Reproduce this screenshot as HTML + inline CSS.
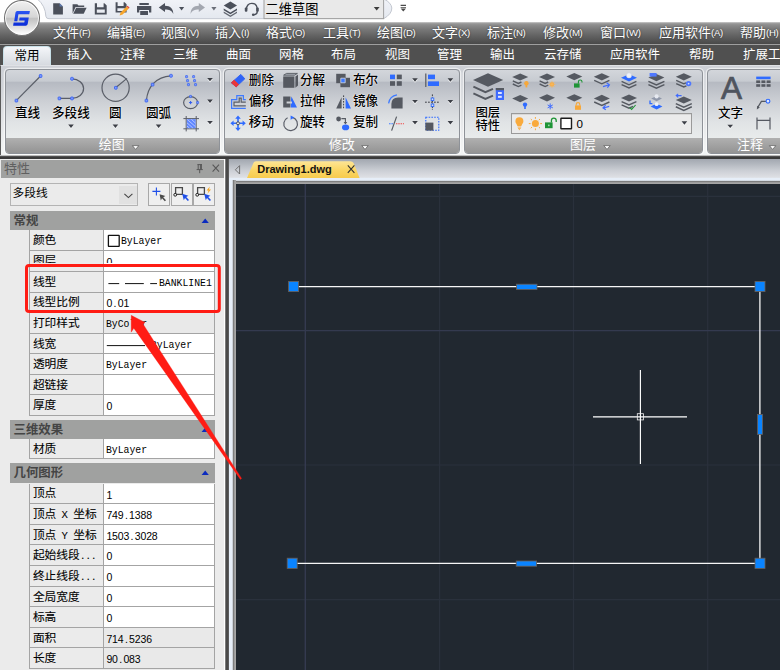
<!DOCTYPE html>
<html lang="zh-CN">
<head>
<meta charset="utf-8">
<title>Drawing1.dwg</title>
<style>
*{box-sizing:border-box;margin:0;padding:0}
html,body{width:780px;height:670px;overflow:hidden;background:#fff}
body{position:relative;font-family:"Liberation Sans","Noto Sans CJK SC",sans-serif;font-size:13px;color:#000}
.abs,.abs *{position:absolute}
#app{position:absolute;left:0;top:0;width:780px;height:670px;overflow:hidden;background:#f0f0f0}
#app div,#app span,#app svg{position:absolute}
.t{white-space:nowrap;line-height:1}

/* title / quick access */
#title{left:0;top:0;width:780px;height:22px;background:#fff;z-index:5}

/* menu bar */
#menu{left:0;top:22px;width:780px;height:23px;background:linear-gradient(#dcdcdc 0,#a2a2a2 4%,#8e8e8e 12%,#787878 32%,#626262 60%,#4e4e4e 88%,#4a4a4a 94%,#8c8c8c 96%,#b4b4b4 100%)}
#menu .t{top:4px;font-size:13px;color:#fff;text-shadow:0 0 2px rgba(0,0,0,.6)}
#menu .t i{font-style:normal;font-size:9.6px;letter-spacing:-.3px;position:relative;top:-1px}

/* tabs */
#tabs{left:0;top:45px;width:780px;height:20px;background:#505050}
#tabs .t{top:4px;font-size:12.5px;color:#fff}
#tabon{left:2.5px;top:0.6px;width:48px;height:21px;background:linear-gradient(#f4f6f9,#d3d7dd);border:1px solid #c8e0e8;border-bottom:none;border-radius:4px 4px 0 0}
#tabon .t{left:11px;top:3px;color:#000}

/* ribbon */
#ribbon{left:0;top:65px;width:780px;height:91px;background:linear-gradient(#cdd0d6 0,#d0d3d8 20px,#e4e6e8 60px,#f2f4f4 85px);border-top:1px solid #dfe1e5;border-left:1.5px solid #5a5a5a}
.grp{top:2.6px;height:85px;border:1px solid #8e9298;border-radius:4px;background:linear-gradient(#d3d6db 0,#c7cbd1 11px,#b6bac2 12.5px,#cdd0d5 32px,#e0e3e5 52px,#e9ecec 69px);overflow:hidden;box-shadow:0 0 0 1.3px rgba(255,255,255,.62)}
.grp .ttl{left:0;bottom:0;width:100%;height:15px;background:linear-gradient(#b0b0b0,#939393)}
.grp .ttl .t{top:0.5px;font-size:13px;color:#fff}
.lbl{font-size:12.6px;font-weight:500;color:#000;white-space:nowrap;line-height:12px;text-shadow:0 0 2px #fff,0 0 1px #fff}
#ricons{left:0;top:0;width:780px;height:160px;pointer-events:none}
#rsep{left:0;top:154.6px;width:780px;height:4.4px;background:linear-gradient(#efefef 0,#8a8a8a 1px,#3a3a3a 1.7px,#3a3a3a 3.6px,#777 4.4px)}

/* properties */
#prop{left:0;top:159px;width:226px;height:511px;background:linear-gradient(90deg,#ebebeb 0,#ebebeb 223.6px,#fff 224px,#fff 225.2px,#999 225.6px)}
#ptitle{left:1px;top:1.2px;width:223px;height:17.6px;background:#a0a1a0}
#ptitle .t{left:3px;top:1.5px;font-size:13px;color:#606060}
#pcombo{left:10px;top:24px;width:128px;height:23px;background:#ebebeb;border:1px solid #b4b4b4}
#pcombo .t{left:1.6px;top:4.4px;font-size:11.7px}
#pcombo .dd{left:108px;top:2px;width:18px;height:18px;background:#e1e1e1}
.pbtn{top:24px;width:22.4px;height:23px;background:#efefef;border:1px solid #a8a8a8}
.sec{left:10px;width:205px;height:19.4px;background:#a0a1a0}
.sec .t{left:3.6px;top:4px;font-size:12.4px;font-weight:bold;color:#454545}
.sec svg{left:191.4px;top:7px}
.row{left:29.4px;width:185.6px;height:21px;border:1px solid #a4a4a4;border-top:none;background:#fff}
.row .n{left:0;top:0;width:73.6px;height:19px;background:#ebebeb;border-right:1px solid #a4a4a4}
.row .n .t{left:2.5px;top:4.6px;font-size:11.7px;-webkit-text-stroke:.08px #000;font-family:"Liberation Serif","Noto Sans CJK SC",sans-serif}
.row .v{left:76px;top:5px;font-family:"Liberation Mono",monospace;font-size:10.8px;white-space:nowrap;line-height:13px;transform:scaleX(.905);transform-origin:0 0}
.row .v.d{font-family:"Liberation Sans",sans-serif;font-size:10.5px;transform:none;top:5px;left:76px;letter-spacing:-.15px}
.row .v.d i{font-style:normal;position:static;display:inline-block;width:5.6px;text-align:center}
.row .w{left:75.6px;top:5px;width:108px;height:14px}
.row .w .v{left:0;top:0}
.row .n i{font-style:normal;position:static;display:inline-block;width:17px;text-align:center;font-family:"Liberation Mono",monospace;font-size:10.6px}
.row .n b{font-weight:normal;position:static;letter-spacing:2.6px;padding-left:1.5px}
.row.a .n .t{top:4.8px}
.row.g{background:#e9e9e9}

/* drawing */
#split{left:225.2px;top:159px;width:3.8px;height:511px;background:linear-gradient(90deg,#9a9a9a 0,#6a6a6a .8px,#4a4a4a 1.4px,#4a4a4a 3.3px,#777 3.8px)}
#dtab{left:229px;top:159px;width:551px;height:25px;background:linear-gradient(#a2a7b0 0,#b3b8bf 5px,#cdd0d6 12px,#dee0e4 18.4px,#e6eef8 19px,#e6eef8 21.4px,#7e7e7e 22px,#7e7e7e 23.2px,#a6a6a6 23.6px,#a6a6a6 25px)}
#dframe{left:229px;top:180.4px;width:7px;height:490px;background:linear-gradient(90deg,#e6eef8 0,#e6eef8 3.4px,#7e7e7e 3.8px,#7e7e7e 5.2px,#a6a6a6 5.6px,#a6a6a6 7px)}
#canvas{left:236px;top:184px;width:544px;height:486px;background:#212830}
#cv{left:0;top:0;width:780px;height:670px}
#anno{left:0;top:0;width:780px;height:670px;z-index:9}
</style>
</head>
<body>
<div id="app">

<div id="title">
  <svg id="qatsvg" width="420" height="23" viewBox="0 0 420 23" style="left:0;top:0">
    <defs>
      <linearGradient id="qg" x1="0" y1="0" x2="0" y2="1"><stop offset="0" stop-color="#f1f3f8"/><stop offset="1" stop-color="#e4e8ef"/></linearGradient>
    </defs>
    <path d="M37.4,-1 A24,24 0 0 1 45.9,16.4 Q46.2,18.7 49,18.7 L383.6,18.7 Q392,14 391.8,8 Q391.5,3 384,-1 Z" fill="url(#qg)" stroke="#c3c7d0" stroke-width="1"/>
    <!-- new -->
    <path d="M53.2,3.2 H59.6 L62.9,6.6 V14.4 H53.2 Z" fill="#4b505b"/>
    <path d="M59.6,3.2 L62.9,6.6 H59.6 Z" fill="#5d79b0"/>
    <!-- open -->
    <path d="M72.6,13.6 V4.2 H77.3 L78.5,5.4 H84.2 V7 H75.6 L72.6,13.6 Z" fill="#4b505b"/>
    <path d="M76.2,7.8 H86.6 L83.7,13.8 H73.2 Z" fill="#4b505b"/>
    <!-- save -->
    <path d="M94.8,3.2 H104.4 L106.7,5.4 V14.4 H94.8 Z M97,3.2 V7.2 H103.6 V3.2 Z M96.8,9.6 V12.8 H104.8 V9.6 Z" fill="#4b505b" fill-rule="evenodd"/>
    <!-- save as -->
    <path d="M115.6,2.2 H124.6 L126.6,4.2 V12.4 H115.6 Z M117.6,2.2 V6 H123.6 V2.2 Z M117.4,8.2 V11 H124.8 V8.2 Z" fill="#4b505b" fill-rule="evenodd"/>
    <path d="M119.6,15.4 L120.6,12.4 L126.6,6.6 L128.8,8.6 L122.6,14.6 Z" fill="#f6a52c"/>
    <path d="M126.6,6.6 L127.6,5.8 L129.6,7.8 L128.8,8.6 Z" fill="#e8433a"/>
    <!-- print -->
    <path d="M139.4,3 H148.8 V5 H139.4 Z" fill="#4b505b"/>
    <path d="M137,6 H151.3 V12.4 H149 V10 H139.3 V12.4 H137 Z" fill="#4b505b"/>
    <path d="M140.2,11 H148 V15 H140.2 Z" fill="#4b505b"/>
    <!-- undo -->
    <path d="M158.8,7.4 L165,3 V5.8 C170.6,5.8 173.3,9 173.3,14 C171.6,10.8 169.4,9.6 165,9.6 V12 Z" fill="#4b505b"/>
    <path d="M179,7 H184.2 L181.6,10.4 Z" fill="#4b505b"/>
    <!-- redo -->
    <path d="M205,7.4 L198.8,3 V5.8 C193.2,5.8 190.6,9 190.6,14 C192.2,10.8 194.4,9.6 198.8,9.6 V12 Z" fill="#a3a7b0"/>
    <path d="M211.3,7 H216.5 L213.9,10.4 Z" fill="#6a6e78"/>
    <!-- layers -->
    <path d="M223.7,5.4 L230.4,1.4 L237,5.4 L230.4,9.4 Z" fill="#4b505b"/>
    <path d="M223.7,8.6 L230.4,12.6 L237,8.6 V10.2 L230.4,14.2 L223.7,10.2 Z" fill="#4b505b"/>
    <path d="M223.7,11.4 L230.4,15.4 L237,11.4 V13 L230.4,17 L223.7,13 Z" fill="#4b505b" opacity=".85"/>
    <!-- headset -->
    <path d="M246.4,9.6 C246.4,5.6 248.6,3.4 251.8,3.4 C255,3.4 257.2,5.6 257.2,9.6 V12 C257.2,13.6 256,14.6 253.6,14.8" fill="none" stroke="#4b505b" stroke-width="1.4"/>
    <rect x="244.8" y="7.6" width="2.6" height="4.2" rx="1" fill="#4b505b"/>
    <rect x="256.2" y="7.6" width="2.6" height="4.2" rx="1" fill="#4b505b"/>
    <circle cx="253.2" cy="14.8" r="1.3" fill="#4b505b"/>
    <!-- combo -->
    <rect x="264" y="-1" width="119.6" height="19.6" fill="#e9e9e9" stroke="#a0a0a0"/>
    <text x="265.6" y="14" font-size="13.2" fill="#000" font-family="'Liberation Sans','Noto Sans CJK SC',sans-serif">二维草图</text>
    <path d="M373.8,7 H379.6 L376.7,10.4 Z" fill="#3c3c3c"/>
    <!-- customize -->
    <path d="M400.6,4.8 H406 V6 H400.6 Z M400.6,7 H406 V7.8 H400.6 Z M400.6,8.4 H406 L403.3,11.6 Z" fill="#4a4a4a"/>
  </svg>
  <svg id="appbtn" width="46" height="40" viewBox="0 0 46 40" style="left:0;top:0">
    <defs>
      <linearGradient id="ab" x1="0" y1="0" x2="0" y2="1">
        <stop offset="0" stop-color="#efefef"/><stop offset=".47" stop-color="#d6d6d6"/><stop offset=".52" stop-color="#c2c2c2"/><stop offset=".8" stop-color="#e2e2e2"/><stop offset="1" stop-color="#fcfcfc"/>
      </linearGradient>
      <linearGradient id="gb" x1="0" y1="0" x2="0" y2="1"><stop offset="0" stop-color="#2c55f2"/><stop offset="1" stop-color="#0a2cd8"/></linearGradient>
    </defs>
    <circle cx="22" cy="18" r="17.5" fill="#fdfdfd" stroke="#727272" stroke-width="1.1"/>
    <circle cx="22" cy="18" r="16" fill="url(#ab)"/>
    <path d="M17.2,11.1 H29.9 L29.3,14.2 H18.4 L17.3,21.3 H14.2 L15.5,12.6 Q15.8,11.1 17.2,11.1 Z M19.6,17.6 H28.8 L27.7,24 Q27.3,25.7 25.7,25.7 H13.1 L13.6,22.6 H24.3 L24.7,20.4 H19.1 Z" fill="url(#gb)"/>
  </svg>
</div>

<div id="menu">
  <span class="t" style="left:53px">文件<i>(F)</i></span>
  <span class="t" style="left:107px">编辑<i>(E)</i></span>
  <span class="t" style="left:161px">视图<i>(V)</i></span>
  <span class="t" style="left:215px">插入<i>(I)</i></span>
  <span class="t" style="left:266px">格式<i>(O)</i></span>
  <span class="t" style="left:323px">工具<i>(T)</i></span>
  <span class="t" style="left:377px">绘图<i>(D)</i></span>
  <span class="t" style="left:432px">文字<i>(X)</i></span>
  <span class="t" style="left:487px">标注<i>(N)</i></span>
  <span class="t" style="left:543px">修改<i>(M)</i></span>
  <span class="t" style="left:600px">窗口<i>(W)</i></span>
  <span class="t" style="left:659px">应用软件<i>(A)</i></span>
  <span class="t" style="left:740px">帮助<i>(H)</i></span>
</div>

<div id="tabs">
  <div id="tabon"><span class="t">常用</span></div>
  <span class="t" style="left:67px">插入</span>
  <span class="t" style="left:120px">注释</span>
  <span class="t" style="left:173px">三维</span>
  <span class="t" style="left:226px">曲面</span>
  <span class="t" style="left:279px">网格</span>
  <span class="t" style="left:331px">布局</span>
  <span class="t" style="left:385px">视图</span>
  <span class="t" style="left:437px">管理</span>
  <span class="t" style="left:490px">输出</span>
  <span class="t" style="left:544px">云存储</span>
  <span class="t" style="left:610px">应用软件</span>
  <span class="t" style="left:689px">帮助</span>
  <span class="t" style="left:743px">扩展工具</span>
</div>

<div id="ribbon">
  <div class="grp" id="g1" style="left:3.5px;width:215px">
    <div class="ttl"><span class="t" style="left:93.2px">绘图</span></div>
  </div>
  <div class="grp" id="g2" style="left:222.5px;width:236px">
    <div class="ttl"><span class="t" style="left:104.2px">修改</span></div>
  </div>
  <div class="grp" id="g3" style="left:462.5px;width:239px">
    <div class="ttl"><span class="t" style="left:105.6px">图层</span></div>
  </div>
  <div class="grp" id="g4" style="left:705.5px;width:100px">
    <div class="ttl"><span class="t" style="left:29.4px">注释</span></div>
  </div>
</div>
<div id="lcombo" style="left:511px;top:113px;width:181px;height:21px;background:#ebebeb;border:1px solid #9a9a9a;box-shadow:inset 0 1px 0 #d8d8d8"></div>
<span class="t" id="bigA" style="left:721px;top:73.4px;font-size:31.5px;color:#4f545e;-webkit-text-stroke:.7px #4f545e;font-family:'Liberation Sans',sans-serif">A</span>
<span class="lbl" style="left:15px;top:107px">直线</span>
<span class="lbl" style="left:52px;top:107px">多段线</span>
<span class="lbl" style="left:109px;top:107px">圆</span>
<span class="lbl" style="left:146px;top:107px">圆弧</span>
<span class="lbl" style="left:248.8px;top:74px">删除</span>
<span class="lbl" style="left:248.8px;top:95px">偏移</span>
<span class="lbl" style="left:248.8px;top:116px">移动</span>
<span class="lbl" style="left:300px;top:74px">分解</span>
<span class="lbl" style="left:300px;top:95px">拉伸</span>
<span class="lbl" style="left:300px;top:116px">旋转</span>
<span class="lbl" style="left:353px;top:74px">布尔</span>
<span class="lbl" style="left:353px;top:95px">镜像</span>
<span class="lbl" style="left:353px;top:116px">复制</span>
<span class="lbl" style="left:475.4px;top:107.4px;font-size:12.4px;line-height:12.2px">图层<br>特性</span>
<span class="lbl" style="left:718px;top:107px">文字</span>
<span class="lbl" style="left:576.4px;top:118.4px;text-shadow:none;font-size:11.6px;font-weight:400">0</span>
<svg id="ricons" width="780" height="160" viewBox="0 0 780 160">
  <defs>
    <g id="dia"><path d="M-8,0 L0,-3.6 L8,0 L0,3.6 Z"/></g>
    <g id="chv"><path d="M-8,0 L0,3.6 L8,0" fill="none" stroke-width="1.5"/></g>
    <path id="dd" d="M-2.8,-1.7 H2.8 L0,1.7 Z"/>
    <rect id="bs" x="-1.3" y="-1.4" width="2.6" height="2.8" rx=".6" fill="#7f9bff" stroke="#2f5bf0" stroke-width=".8"/>
  </defs>
  <g fill="#f4f5f6" transform="translate(0,1.1)">
    <use href="#dd" x="71" y="126.2"/><use href="#dd" x="115.4" y="126.2"/><use href="#dd" x="158.6" y="126.2"/>
    <use href="#dd" x="210" y="79.6"/><use href="#dd" x="210" y="101.2"/><use href="#dd" x="210" y="122.6"/>
    <use href="#dd" x="415" y="80"/><use href="#dd" x="415" y="101.6"/><use href="#dd" x="415" y="122.8"/>
    <use href="#dd" x="450.4" y="80"/><use href="#dd" x="450.4" y="101.6"/><use href="#dd" x="450.4" y="122.8"/>
    <use href="#dd" x="684.4" y="123"/>
    <use href="#dd" x="730.2" y="126.4"/>
  </g>
  <g fill="#3c3f46">
    <use href="#dd" x="71" y="126.2"/><use href="#dd" x="115.4" y="126.2"/><use href="#dd" x="158.6" y="126.2"/>
    <use href="#dd" x="210" y="79.6"/><use href="#dd" x="210" y="101.2"/><use href="#dd" x="210" y="122.6"/>
    <use href="#dd" x="415" y="80"/><use href="#dd" x="415" y="101.6"/><use href="#dd" x="415" y="122.8"/>
    <use href="#dd" x="450.4" y="80"/><use href="#dd" x="450.4" y="101.6"/><use href="#dd" x="450.4" y="122.8"/>
    <use href="#dd" x="684.4" y="123"/>
    <use href="#dd" x="730.2" y="126.4"/>
  </g>
  <g fill="#fff" stroke="#555" stroke-width=".7" transform="translate(0,147)">
    <path id="dw" d="M132.4,-1.4 H138.8 L135.6,2.4 Z"/><path d="M361.8,-1.4 H368.2 L365,2.4 Z"/><path d="M603.8,-1.4 H610.2 L607,2.4 Z"/><path d="M769.4,-1.4 H775.8 L772.6,2.4 Z"/>
  </g>

  <!-- group 1 : draw -->
  <g fill="none" stroke="#5a5e68" stroke-width="1.2">
    <path d="M16.2,100.6 L40.6,76"/>
    <path d="M59.4,98.4 H72 A11.6,9.8 0 0 0 72,78.8"/>
    <circle cx="115.6" cy="87.8" r="13.6"/>
    <path d="M115.6,87.8 L127,78.4"/>
    <path d="M146.4,100.6 C147.5,87 156,76.6 171,75.8"/>
    <ellipse cx="190.6" cy="102.6" rx="7" ry="6"/>
    <path d="M183.4,118.6 H199 M183.4,128.8 H199 M186.2,116 V131.4 M196.2,116 V131.4" stroke-width="1"/>
  </g>
  <use href="#bs" x="16.4" y="100.6"/><use href="#bs" x="40.6" y="76"/>
  <use href="#bs" x="59.4" y="98.4"/><use href="#bs" x="72" y="98.4"/><use href="#bs" x="72" y="78.8"/>
  <use href="#bs" x="115.8" y="87.8"/>
  <use href="#bs" x="146.4" y="100.6"/><use href="#bs" x="152.6" y="84.6"/><use href="#bs" x="171" y="75.8"/>
  <g transform="scale(.8)" >
    <use href="#bs" x="233.2" y="95.8"/><use href="#bs" x="242" y="95.8"/>
    <use href="#bs" x="234.4" y="100.8"/><use href="#bs" x="243.2" y="100.8"/>
    <use href="#bs" x="235.6" y="105.8"/><use href="#bs" x="244.4" y="105.8"/>
    <use href="#bs" x="238.2" y="120.6"/><use href="#bs" x="247" y="128.2"/>
  </g>
  <path d="M189,102.6 H192.2 M190.6,101 V104.2" stroke="#2f5bf0" stroke-width="1" fill="none"/>
  <rect x="186.8" y="119.2" width="8.8" height="9" fill="#5f86ff"/>
  <path d="M195.4,123 L191.4,119.4 M195.4,126.6 L187.4,119.6 M192.8,128 L187,122.8 M189.4,128 L187,126" stroke="#c9d6ff" stroke-width=".8" fill="none"/>

  <!-- group 2 : modify -->
  <!-- erase -->
  <path d="M231.4,82.8 L240.8,74.4 L244.8,78.8 L236.2,86.8 Z" fill="#2f63f6" stroke="#2f63f6" stroke-width="1" stroke-linejoin="round"/>
  <path d="M231.4,82.8 L234.2,80.2 L238.6,84.6 L236.2,86.8 Z" fill="#e8373a" stroke="#e8373a" stroke-width="1" stroke-linejoin="round"/>
  <!-- offset -->
  <path d="M245.8,108.4 H231.6 V99.6 H236.8 V95.6 H243.4 V99.6 H245.8" fill="none" stroke="#3f7bff" stroke-width="1.2"/>
  <path d="M245.8,105.8 H234 V102.2 H239.2 V98.2 H241.2 V102.2 H245.8" fill="none" stroke="#5a5e68" stroke-width="1.2"/>
  <!-- move -->
  <g fill="#2f6bff">
    <path d="M238,115.6 L240.8,118.8 H238.8 V122 H237.2 V118.8 H235.2 Z"/>
    <path d="M238,131 L240.8,127.8 H238.8 V124.6 H237.2 V127.8 H235.2 Z"/>
    <path d="M230.4,123.3 L233.6,120.5 V122.5 H236.8 V124.1 H233.6 V126.1 Z"/>
    <path d="M245.8,123.3 L242.6,120.5 V122.5 H239.4 V124.1 H242.6 V126.1 Z"/>
  </g>
  <circle cx="238" cy="123.3" r="1.5" fill="#e8eaee" stroke="#4a4e58" stroke-width="1"/>
  <!-- explode (cube) -->
  <path d="M283.2,76.4 H294.4 V87.8 H283.2 Z" fill="#555961"/>
  <path d="M283.6,75.2 L286.6,73.4 H297.4 L294.6,75.2 Z" fill="#aeb2ba" stroke="#555961" stroke-width=".9"/>
  <path d="M295.4,76.4 L298,74.4 V85.4 L295.4,87.8 Z" fill="#555961"/>
  <!-- stretch -->
  <path d="M283.2,96.6 H290.4 V101.6 H286.6 V103.6 H290.4 V107.6 H283.2 Z" fill="#555961"/>
  <path d="M291.4,96.6 L297,107.6 H290.8 V103.6 H292 V101.6 H290.8 Z" fill="#2f6bff"/>
  <!-- rotate -->
  <path d="M292.6,117.4 A6.8,6.8 0 1 1 287.6,117.8" fill="none" stroke="#5a5e68" stroke-width="1.2"/>
  <path d="M290.6,115.4 L294.4,117.6 L290.6,119.8 Z" fill="#2f6bff"/>
  <!-- boolean -->
  <path d="M336.2,73.8 H345.6 V83.2 H336.2 Z" fill="#555961"/>
  <path d="M340.4,77.8 H350 V87.2 H340.4 Z" fill="#555961"/>
  <path d="M340.8,78.2 H345.2 V82.8 H340.8 Z" fill="#3f7bff" stroke="#d8dce4" stroke-width=".8"/>
  <!-- mirror -->
  <path d="M341.6,97.2 V108.4 H336.2 Z" fill="#555961"/>
  <path d="M343.6,95.4 V109.4" stroke="#3c3f46" stroke-width="1" stroke-dasharray="1.6 1.2" fill="none"/>
  <path d="M345.6,97.2 V108.4 H351 Z" fill="#2f6bff"/>
  <!-- copy -->
  <circle cx="338.6" cy="119" r="2.4" fill="#555961"/>
  <path d="M341.4,118.6 H345.4 V123" fill="none" stroke="#555961" stroke-width="1.1"/>
  <path d="M343.6,122 L345.4,124.6 L347.2,122 Z" fill="#555961"/>
  <ellipse cx="345.6" cy="127.4" rx="3.6" ry="2.8" fill="#2f6bff"/>
  <!-- array -->
  <rect x="390" y="74.6" width="5" height="4.6" fill="#2f6bff"/>
  <rect x="396.8" y="74.6" width="5" height="4.6" fill="#555961"/>
  <rect x="390" y="81.2" width="5" height="4.6" fill="#555961"/>
  <rect x="396.8" y="81.2" width="5" height="4.6" fill="#555961"/>
  <!-- fillet -->
  <path d="M391.4,108.6 V104 Q391.4,97.4 398,97.4 H402.6 V108.6 Z" fill="#555961"/>
  <path d="M388.6,103.4 Q389.6,96 397,94.8" fill="none" stroke="#3f7bff" stroke-width="1.3"/>
  <!-- trim -->
  <path d="M391.6,130.6 L396.6,116.6" stroke="#555961" stroke-width="1.2" fill="none"/>
  <path d="M389,123.8 H393.4" stroke="#3f7bff" stroke-width="1.1" stroke-dasharray="1.6 .8" fill="none"/>
  <path d="M396,123.8 H404" stroke="#f04848" stroke-width="1.1" stroke-dasharray="1.4 .9" fill="none"/>
  <!-- align -->
  <path d="M425.8,73.6 V87" stroke="#555961" stroke-width="1.2" fill="none"/>
  <rect x="428" y="74.6" width="7" height="4.6" fill="#2f6bff"/>
  <rect x="428" y="81.4" width="11" height="4.6" fill="#2f6bff"/>
  <!-- break -->
  <path d="M425,102.2 H440 M432.4,94.4 V110" stroke="#3c3f46" stroke-width="1" stroke-dasharray="1.8 1.2" fill="none"/>
  <rect x="431.2" y="98" width="2.6" height="2.6" fill="#dfe3ea" stroke="#2f6bff" stroke-width=".9"/>
  <rect x="431.2" y="104" width="2.6" height="2.6" fill="#dfe3ea" stroke="#2f6bff" stroke-width=".9"/>
  <!-- scale -->
  <rect x="425.8" y="117.2" width="13" height="13" fill="none" stroke="#2f6bff" stroke-width="1.1" stroke-dasharray="1.6 1.2"/>
  <rect x="425.4" y="122.6" width="8" height="8" fill="#555961"/>

  <!-- group 3 : layers -->
  <g fill="#555961" stroke="#555961">
    <!-- big -->
    <path d="M473,80 L488,73.2 L503.2,80 L488,86.8 Z" stroke="none"/>
    <path d="M473.4,86.6 L485.4,92.2 L493,88.8" fill="none" stroke-width="2"/>
    <path d="M473.4,93.4 L485.4,99 L493,95.6" fill="none" stroke-width="2"/>
    <!-- row 1 -->
    <use href="#dia" x="520.2" y="77" stroke="none"/>
    <path d="M512.8,80.8 L518.4,83.4 L521.4,82 M512.8,84 L518.4,86.6 L521.4,85.2" fill="none" stroke-width="1.4"/>
    <use href="#dia" x="547" y="77" stroke="none"/>
    <path d="M539.6,80.8 L545.2,83.4 L548.2,82 M539.6,84 L545.2,86.6 L548.2,85.2" fill="none" stroke-width="1.4"/>
    <use href="#dia" x="574.3" y="76.6" stroke="none"/>
    <use href="#dia" x="601.8" y="76.8" stroke="none"/>
    <path d="M594.2,80.4 L601.8,83.8 L609.4,80.4" fill="none" stroke-width="1.4"/>
    <path d="M621.6,81.4 L629,84.8 L636.4,81.4 M621.6,84.6 L629,88 L636.4,84.6" fill="none" stroke-width="1.4"/>
    <use href="#dia" x="656.4" y="77.6" stroke="none"/>
    <use href="#chv" x="656.4" y="81.4"/><use href="#chv" x="656.4" y="84.6"/>
    <use href="#dia" x="683.8" y="76.8" stroke="none"/>
    <path d="M676.2,80.4 L683.8,83.8 L686,82.8 M676.2,83.6 L683.8,87 L686.4,85.8" fill="none" stroke-width="1.4"/>
    <!-- row 2 -->
    <use href="#dia" x="520.2" y="98.6" stroke="none"/>
    <use href="#dia" x="547" y="97.8" stroke="none"/>
    <use href="#dia" x="574.3" y="97.8" stroke="none"/>
    <use href="#dia" x="601.8" y="98.4" stroke="none"/>
    <path d="M594.2,102 L601.8,105.4 L609.4,102" fill="none" stroke-width="1.4"/>
    <use href="#dia" x="629" y="98" stroke="none"/>
    <path d="M621.6,101.6 L629,105 L636.4,101.6 M621.6,104.8 L629,108.2 L633,106.4" fill="none" stroke-width="1.4"/>
    <use href="#dia" x="683.8" y="100" stroke="none"/>
    <use href="#chv" x="683.8" y="103.6"/><use href="#chv" x="683.8" y="106.8"/>
  </g>
  <!-- big list badge -->
  <rect x="495.8" y="88" width="8.2" height="12" fill="#3f6bff"/>
  <rect x="495.8" y="88" width="8.2" height="2.2" fill="#555961"/>
  <rect x="498" y="92" width="3.8" height="2" fill="#dfe6ff"/><rect x="498" y="95.8" width="3.8" height="2" fill="#dfe6ff"/>
  <!-- r1 decorations -->
  <circle cx="526.4" cy="83.2" r="2.2" fill="#f7a83a"/><rect x="525.5" y="84.6" width="1.8" height="2.8" fill="#f7a83a"/>
  <circle cx="552" cy="84.4" r="2.2" fill="#f7a83a"/><path d="M552,80.8 V88 M548.4,84.4 H555.6 M549.4,81.8 L554.6,87 M554.6,81.8 L549.4,87" stroke="#f7b860" stroke-width=".7"/>
  <rect x="574" y="83.4" width="5.6" height="4.2" fill="#1f9436"/><path d="M578.4,83.4 V81.8 A1.8,1.8 0 0 1 582,81.8 V82.6" fill="none" stroke="#1f9436" stroke-width="1.1"/>
  <path d="M603,86.6 L608.6,85 M606.6,82.8 L609.4,84.8 L607.4,87.6" fill="none" stroke="#3f6bff" stroke-width="1.2"/>
  <path d="M621,77.8 L629,74.2 L637,77.8 L629,81.4 Z" fill="#2f6bff"/>
  <circle cx="629" cy="75.4" r="2.6" fill="#eef1f7" stroke="#c4cbdc" stroke-width=".5"/>
  <rect x="649.6" y="73" width="7" height="3.6" fill="#4f78ff"/>
  <circle cx="688.6" cy="83.6" r="2.7" fill="#4f78ff"/><circle cx="688.6" cy="83.6" r=".9" fill="#cfdaff"/>
  <!-- r2 decorations -->
  <circle cx="525" cy="104.6" r="2.2" fill="#2f6bff"/><rect x="524.2" y="106" width="1.6" height="3" fill="#2f6bff"/>
  <path d="M550.2,103.4 V109.4 M547.6,104.9 L552.8,107.9 M552.8,104.9 L547.6,107.9" stroke="#3f6bff" stroke-width="1" fill="none"/>
  <rect x="575" y="105.4" width="6" height="4.4" fill="#f7a83a"/><path d="M576.2,105.4 V104.4 A1.8,1.8 0 0 1 579.8,104.4 V105.4" fill="none" stroke="#f7a83a" stroke-width="1.1"/>
  <path d="M609.2,106.4 L603.4,108 M605.6,105.2 L603,107.8 L605.8,109.8" fill="none" stroke="#3f6bff" stroke-width="1.2"/>
  <path d="M629.6,107.4 L631.6,109.4 L635.6,105" fill="none" stroke="#1f9436" stroke-width="1.1"/>
  <path d="M651.2,98.6 L656.6,96 L662,98.6 L656.6,101.2 Z" fill="#9098aa"/>
  <circle cx="656.6" cy="96.4" r="2.1" fill="#e6e9f0"/>
  <path d="M650.6,106.4 L656.6,103.6 L662.4,106.4 L656.6,109.4 Z" fill="#2f6bff"/>
  <circle cx="656.6" cy="104.2" r="1.9" fill="#eef1f7"/>
  <path d="M650,100.4 V103.6 H652.4" fill="none" stroke="#2f6bff" stroke-width="1.3"/>
  <path d="M676.2,95.6 H681.6 M678.2,93.8 L676.2,95.6 L678.2,97.4" fill="none" stroke="#3f6bff" stroke-width="1.1"/>
  <!-- layer combo icons -->
  <path d="M519.4,117.2 A4,4 0 0 1 523.4,121.2 C523.4,123.4 521.6,124.4 521.4,126 H517.4 C517.2,124.4 515.4,123.4 515.4,121.2 A4,4 0 0 1 519.4,117.2 Z" fill="#f9aa3c"/>
  <path d="M517.6,127 H521.2 M518,128.4 H520.8 M518.8,129.6 H520" stroke="#f9aa3c" stroke-width=".9"/>
  <circle cx="535.4" cy="123.6" r="3.5" fill="#f9aa3c"/>
  <path d="M535.4,117 V118.8 M535.4,128.4 V130.2 M528.8,123.6 H530.6 M540.2,123.6 H542 M530.8,119 L532,120.2 M538.8,127 L540,128.2 M540,119 L538.8,120.2 M532,127 L530.8,128.2" stroke="#f9aa3c" stroke-width="1" fill="none"/>
  <rect x="545" y="122.4" width="7.6" height="5.8" fill="#1f9436"/>
  <path d="M551.4,122.4 V120.6 A2.4,2.4 0 0 1 556.2,120.6 V122" fill="none" stroke="#1f9436" stroke-width="1.3"/>
  <rect x="548" y="124.6" width="1.6" height="1.6" fill="#9fd8a8"/>
  <rect x="560.9" y="118.2" width="10.6" height="10.6" rx=".4" fill="#fff" stroke="#1c1c1c" stroke-width="1.4"/>

  <!-- group 4 : annotate -->
  <rect x="756.2" y="76.6" width="14.4" height="2.6" fill="#2f6bff"/>
  <g fill="#555961">
    <rect x="756.2" y="80.4" width="4" height="2.6"/><rect x="761.4" y="80.4" width="4" height="2.6"/><rect x="766.6" y="80.4" width="4" height="2.6"/>
    <rect x="756.2" y="84.2" width="4" height="2.6"/><rect x="761.4" y="84.2" width="4" height="2.6"/><rect x="766.6" y="84.2" width="4" height="2.6"/>
  </g>
  <path d="M757.6,107.6 L761.4,101.4 H766" fill="none" stroke="#555961" stroke-width="1.2"/>
  <path d="M756.8,109.4 L757.2,105.8 L759.8,107.6 Z" fill="#555961"/>
  <circle cx="768" cy="101.2" r="1.9" fill="#dfe6ff" stroke="#2f6bff" stroke-width="1.1"/>
  <path d="M757,117.6 V129.4 M770,117.6 V129.4 M757,120.4 H770" fill="none" stroke="#555961" stroke-width="1.2"/>
</svg>
<div id="rsep"></div>

<div id="prop">
  <div id="ptitle"><span class="t">特性</span>
    <svg width="30" height="12" viewBox="0 0 30 12" style="left:193px;top:3px"><path d="M3.4,1.6 H8 M4.2,1.6 V6.4 M7.4,1.6 V6.4 M6.4,1.6 V6.4 M2.6,6.6 H8.8 M5.7,6.6 V10.2" fill="none" stroke="#585858" stroke-width="1"/><path d="M18.6,1.6 L25,8.6 M25,1.6 L18.6,8.6" fill="none" stroke="#585858" stroke-width="1.1"/></svg>
  </div>
  <div id="pcombo"><span class="t" style="font-family:'Liberation Serif','Noto Sans CJK SC',sans-serif">多段线</span><div class="dd"><svg width="17" height="17" viewBox="0 0 17 17" style="left:1.4px;top:0.6px"><path d="M4.4,6.8 L8.4,10.6 L12.4,6.8" fill="none" stroke="#444" stroke-width="1.1"/></svg></div></div>
  <div class="pbtn" style="left:148px"><svg width="20" height="20" viewBox="0 0 20 20" style="left:0;top:0"><path d="M3.4,7.4 H11.4 M7.4,3.4 V11.4" stroke="#1f4fe8" stroke-width="1.1" fill="none"/><path d="M10.6,10.2 L16.4,12 L14.2,13.2 L17,16.2 L15.8,17.2 L13,14.2 L11.8,16.4 Z" fill="#4a4a4a"/></svg></div>
  <div class="pbtn" style="left:171px"><svg width="20" height="20" viewBox="0 0 20 20" style="left:0;top:0"><path d="M3.6,3.6 H10.4 V10.4 H3.6 Z" fill="none" stroke="#4a4a4a" stroke-width="1.3"/><circle cx="3.2" cy="10.8" r="1.4" fill="#f0f0f0" stroke="#222" stroke-width="1"/><path d="M10.2,9.8 L16.4,11.8 L14.2,13 L17,16 L15.8,17 L13,14 L11.8,16.2 Z" fill="#1f4fe8"/></svg></div>
  <div class="pbtn" style="left:193px"><svg width="20" height="20" viewBox="0 0 20 20" style="left:0;top:0"><path d="M3.6,3.6 H10.4 V10.4 H3.6 Z" fill="none" stroke="#4a4a4a" stroke-width="1.3"/><circle cx="3.2" cy="10.8" r="1.4" fill="#f0f0f0" stroke="#222" stroke-width="1"/><path d="M10.2,9.8 L16.4,11.8 L14.2,13 L17,16 L15.8,17 L13,14 L11.8,16.2 Z" fill="#1f4fe8"/><path d="M15.8,2.4 L12.6,6.6 H14.6 L13.4,9.8 L17,5.4 H15 Z" fill="#f5a623"/></svg></div>

  <div class="sec" style="top:52px"><span class="t">常规</span><svg width="10" height="6" viewBox="0 0 10 6"><path d="M0.6,5 L4.2,0.6 L7.8,5 Z" fill="#0b2bbf"/></svg></div>
  <div class="row a" style="top:71.4px;height:20.6px"><div class="n" style="height:19.6px;padding-top:.4px"><span class="t">颜色</span></div><div class="w"><svg width="14" height="14" style="left:.8px;top:-1.8px"><rect x="1.4" y="1.4" width="10.8" height="11" rx=".3" fill="#fff" stroke="#111" stroke-width="1.3"/></svg><span class="v" style="left:15px">ByLayer</span></div></div>
  <div class="row a" style="top:92px;height:21px"><div class="n" style="height:20px"><span class="t">图层</span></div><span class="v d">0</span></div>
  <div class="row a" style="top:113px;height:20.5px"><div class="n" style="height:19.5px"><span class="t">线型</span></div><div class="w"><svg width="54" height="14" style="left:0;top:-1px"><path d="M2.4,7.6 H13.2 M19,7.6 H37.8 M44.2,7.6 H51" stroke="#111" stroke-width="1"/></svg><span class="v" style="left:52.6px">BANKLINE1</span></div></div>
  <div class="row a" style="top:133.5px;height:20.5px"><div class="n" style="height:19.5px"><span class="t" style="top:4.3px">线型比例</span></div><span class="v d" style="top:4.5px">0<i>.</i>01</span></div>
  <div class="row a g" style="top:154px;height:21px"><div class="n" style="height:20px"><span class="t">打印样式</span></div><span class="v">ByColor</span></div>
  <div class="row a" style="top:175px;height:20px"><div class="n" style="height:19px"><span class="t">线宽</span></div><div class="w"><svg width="54" height="14" style="left:0;top:-1px"><path d="M.8,7.6 H39" stroke="#111" stroke-width="1"/></svg><span class="v" style="left:45.4px">ByLayer</span></div></div>
  <div class="row a" style="top:195px;height:21px"><div class="n" style="height:20px"><span class="t">透明度</span></div><span class="v">ByLayer</span></div>
  <div class="row a" style="top:216px;height:20px"><div class="n" style="height:19px"><span class="t">超链接</span></div><span class="v"></span></div>
  <div class="row a" style="top:236px;height:21px"><div class="n" style="height:20px"><span class="t">厚度</span></div><span class="v d">0</span></div>
  <div class="sec" style="top:260.6px;height:19.6px"><span class="t">三维效果</span><svg width="10" height="6" viewBox="0 0 10 6"><path d="M0.6,5 L4.2,0.6 L7.8,5 Z" fill="#0b2bbf"/></svg></div>
  <div class="row" style="top:280.2px;height:20.3px"><div class="n" style="height:19.3px"><span class="t">材质</span></div><span class="v">ByLayer</span></div>
  <div class="sec" style="top:304.2px;height:20.3px"><span class="t">几何图形</span><svg width="10" height="6" viewBox="0 0 10 6"><path d="M0.6,5 L4.2,0.6 L7.8,5 Z" fill="#0b2bbf"/></svg></div>
  <div class="row" style="top:324.5px;height:20.5px"><div class="n" style="height:19.5px"><span class="t">顶点</span></div><span class="v d">1</span></div>
  <div class="row" style="top:345px;height:21px"><div class="n" style="height:20px"><span class="t">顶点<i>X</i>坐标</span></div><span class="v d">749<i>.</i>1388</span></div>
  <div class="row" style="top:366px;height:20px"><div class="n" style="height:19px"><span class="t">顶点<i>Y</i>坐标</span></div><span class="v d">1503<i>.</i>3028</span></div>
  <div class="row" style="top:386px;height:21px"><div class="n" style="height:20px"><span class="t">起始线段<b>...</b></span></div><span class="v d">0</span></div>
  <div class="row" style="top:407px;height:21px"><div class="n" style="height:20px"><span class="t">终止线段<b>...</b></span></div><span class="v d">0</span></div>
  <div class="row" style="top:428px;height:20px"><div class="n" style="height:19px"><span class="t">全局宽度</span></div><span class="v d">0</span></div>
  <div class="row" style="top:448px;height:21px"><div class="n" style="height:20px"><span class="t">标高</span></div><span class="v d">0</span></div>
  <div class="row g" style="top:469px;height:20px"><div class="n" style="height:19px"><span class="t">面积</span></div><span class="v d">714<i>.</i>5236</span></div>
  <div class="row g" style="top:489px;height:21px"><div class="n" style="height:20px"><span class="t">长度</span></div><span class="v d">90<i>.</i>083</span></div>
  <!-- pasted strip that hides lower half of the layer row -->
  <div style="left:30.4px;top:103.6px;width:72.6px;height:8.9px;background:#ebebeb"></div>
  <div style="left:104px;top:103.6px;width:110px;height:8.9px;background:#fff"></div>
</div>

<div id="split"></div>
<div id="dtab">
  <svg width="140" height="25" viewBox="0 0 140 25" style="left:1px;top:-0.4px">
    <defs><linearGradient id="tg" x1="0" y1="0" x2="0" y2="1"><stop offset="0" stop-color="#fde596"/><stop offset=".5" stop-color="#fbd766"/><stop offset="1" stop-color="#f7cb4e"/></linearGradient></defs>
    <path d="M5.4,10.8 L9.6,6.6 V15 Z" fill="none" stroke="#666" stroke-width=".9"/>
    <path d="M17,19 L23.4,4 Q24.2,2.2 26.4,2.2 H120 Q122.6,2.2 123.6,4 L129.6,19 Z" fill="url(#tg)"/>
    <path d="M117.8,6.4 L124.4,13.8 M124.4,6.4 L117.8,13.8" stroke="#333" stroke-width="1.1" fill="none"/>
    <text x="27.2" y="14.2" font-family="'Liberation Sans',sans-serif" font-weight="bold" font-size="11" fill="#111">Drawing1.dwg</text>
  </svg>
</div>
<div id="dframe"></div>
<div id="canvas"></div>
<svg id="cv" width="780" height="670" viewBox="0 0 780 670">
  <g stroke="#2a313c" stroke-width="1.2" fill="none">
    <path d="M439.6,184 V670 M573.5,184 V670 M707.7,184 V670"/>
    <path d="M236,196.3 H780 M236,465 H780 M236,599.6 H780"/>
  </g>
  <g stroke="#343a4f" stroke-width="1.4" fill="none">
    <path d="M305.3,184 V670 M236,330.6 H780"/>
  </g>
  <path d="M293,286.6 H759.9 V563.3 H292" fill="none" stroke="#f6f6f6" stroke-width="1.3"/>
  <g fill="#0a84ff" stroke="#6a6058" stroke-width=".8">
    <rect x="288.6" y="281.4" width="10" height="10.2"/>
    <rect x="755" y="281.4" width="10" height="10.2"/>
    <rect x="755" y="558.2" width="10" height="10.2"/>
    <rect x="287.2" y="558.2" width="10" height="10.2"/>
    <rect x="516.6" y="284.2" width="20.4" height="5.2"/>
    <rect x="516.2" y="561" width="20.4" height="5.2"/>
    <rect x="757.6" y="414.4" width="5" height="20"/>
  </g>
  <path d="M593,416.8 H687 M640.4,370 V464" stroke="#fff" stroke-width="1.15" fill="none"/>
  <rect x="637.3" y="413.7" width="6.2" height="6.2" fill="none" stroke="#f4f4f4" stroke-width=".8"/>
</svg>
<svg id="anno" width="780" height="670" viewBox="0 0 780 670">
  <rect x="26.5" y="265.4" width="192.8" height="46.2" rx="2.6" fill="none" stroke="#ff1c14" stroke-width="3"/>
  <path d="M131.2,315.3 L145,322.4 L143.2,324.2 L241.6,478.4 L240.4,479.4 L133.8,328.2 L131.2,332.2 Z" fill="#ff1c14" stroke="#ff1c14" stroke-width=".3"/>
</svg>

</div>
</body>
</html>
